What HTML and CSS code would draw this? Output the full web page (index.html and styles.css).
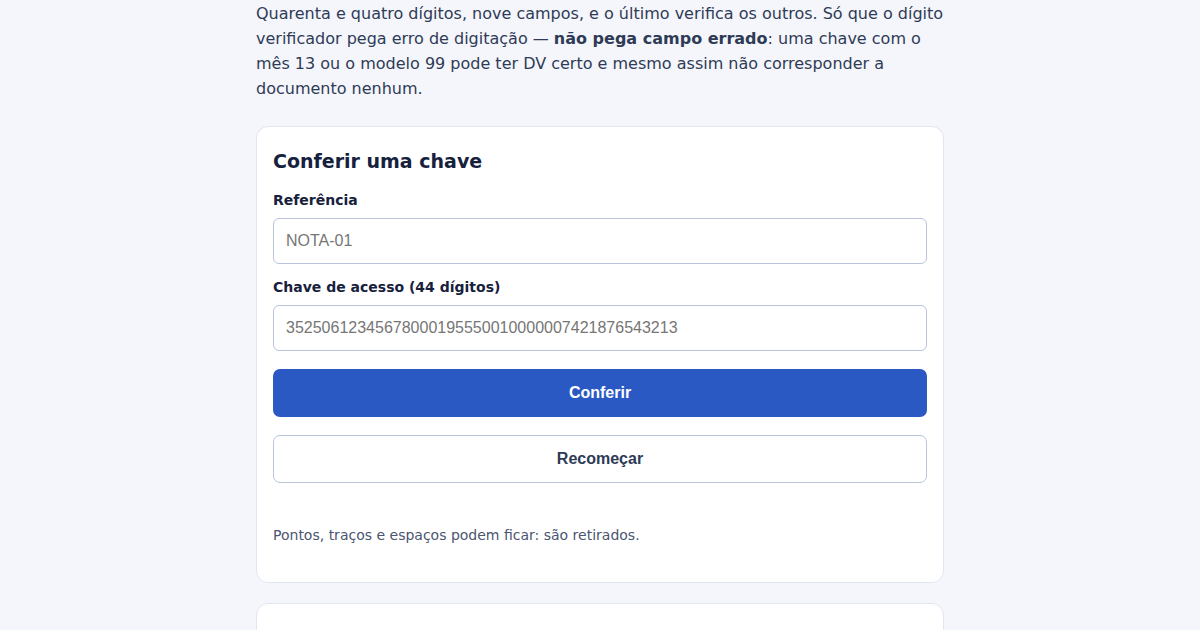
FILE: index.html
```html
<!DOCTYPE html>
<html lang="pt-BR">
<head>
<meta charset="utf-8">
<title>Conferir chave de acesso</title>
<link rel="stylesheet" href="styles.css">
</head>
<body>
<main class="page">
  <p class="intro">Quarenta e quatro dígitos, nove campos, e o último verifica os outros. Só que o dígito verificador pega erro de digitação — <strong>não pega campo errado</strong>: uma chave com o mês 13 ou o modelo 99 pode ter DV certo e mesmo assim não corresponder a documento nenhum.</p>

  <section class="card">
    <h2 class="card-title">Conferir uma chave</h2>
    <form class="form">
      <label class="label" for="ref">Referência</label>
      <input class="field" id="ref" type="text" placeholder="NOTA-01">
      <label class="label label-second" for="chave">Chave de acesso (44 dígitos)</label>
      <input class="field" id="chave" type="text" placeholder="35250612345678000195550010000007421876543213">
      <button class="btn btn-primary" type="button">Conferir</button>
      <button class="btn btn-secondary" type="button">Recomeçar</button>
    </form>
    <p class="hint">Pontos, traços e espaços podem ficar: são retirados.</p>
  </section>

  <section class="card">
    <h2 class="card-title">Resultado</h2>
    <p class="hint">Nenhuma chave conferida ainda.</p>
  </section>
</main>
</body>
</html>
```

FILE: styles.css
```css
html, body {
  margin: 0;
  padding: 0;
}
body {
  background: #f4f6fb;
  font-family: "DejaVu Sans", sans-serif;
  color: #2d3a55;
}
.page {
  width: 688px;
  margin: 0 auto;
  padding-top: 1px;
  display: flex;
  flex-direction: column;
  gap: 20px;
}
.intro {
  margin: 0 0 5px;
  font-size: 16px;
  line-height: 25px;
  color: #2f3b56;
}
.intro strong {
  font-weight: bold;
}
.card {
  background: #ffffff;
  border: 1px solid #e1e6f0;
  border-radius: 12px;
  padding: 20px 16px 20px;
}
.card-title {
  margin: 0 0 15px;
  font-size: 19px;
  line-height: 28px;
  font-weight: bold;
  color: #15213d;
}
.form {
  display: flex;
  flex-direction: column;
}
.label {
  font-size: 14px;
  line-height: 21px;
  font-weight: bold;
  color: #17213c;
  margin-bottom: 7px;
}
.label-second {
  margin-top: 13px;
}
.field {
  box-sizing: border-box;
  height: 46px;
  border: 1px solid #b9c3da;
  border-radius: 6px;
  padding: 0 12px;
  font-family: "Liberation Sans", Arial, sans-serif;
  font-size: 16px;
  color: #1a2440;
  background: #fff;
}
.field::placeholder {
  color: #767676;
}
.btn {
  box-sizing: border-box;
  height: 48px;
  border-radius: 7px;
  font-family: "Liberation Sans", Arial, sans-serif;
  font-size: 16px;
  font-weight: bold;
  cursor: pointer;
}
.btn-primary {
  margin-top: 18px;
  background: #2a59c4;
  border: 0;
  color: #ffffff;
}
.btn-secondary {
  margin-top: 18px;
  background: #ffffff;
  border: 1px solid #b9c3da;
  color: #2d3a55;
}
.hint {
  margin: 42px 0 16px;
  font-size: 14px;
  line-height: 21px;
  color: #4a5570;
}
```
